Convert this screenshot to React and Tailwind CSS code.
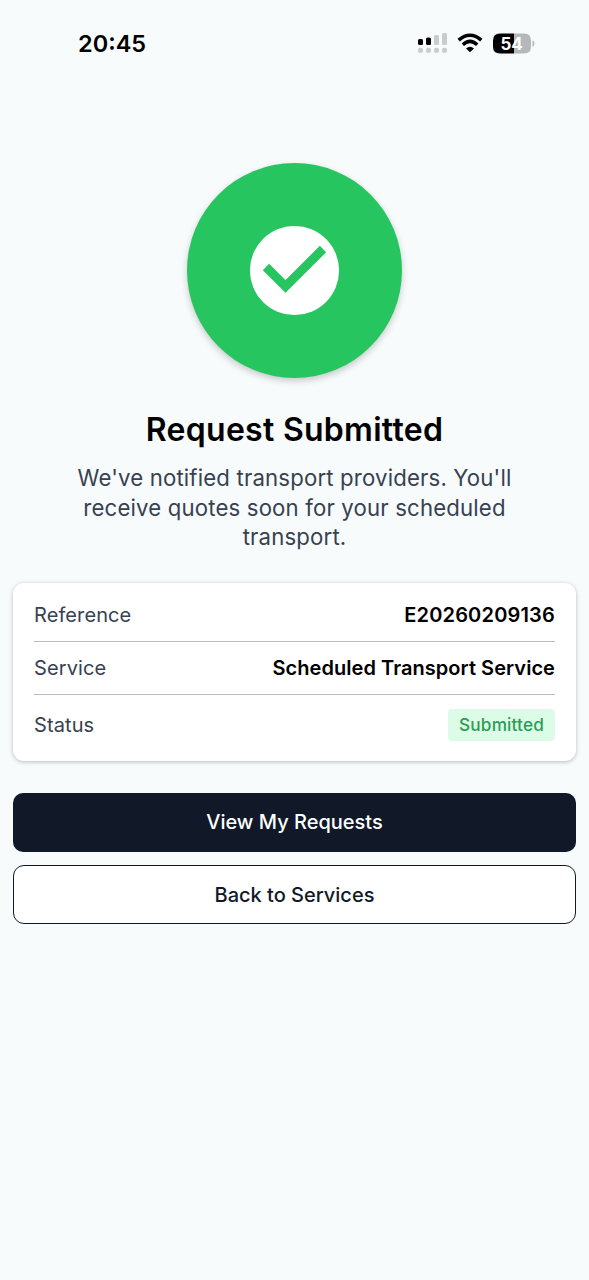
function Row({ label, children, last }) {
  return (
    <div className={"flex items-center justify-between " + (last ? "h-[60px]" : "h-[53px] border-b border-[#b9bbbc] pt-px")}>
      <span className="text-[20px] leading-6 tracking-[0.1px] text-[#374151]">{label}</span>
      {children}
    </div>
  );
}

function StatusBar() {
  return (
    <header className="flex h-[88px] items-center justify-between pl-[78px] pr-[54px]">
      <span className="text-[23.5px] font-semibold leading-7 text-black">20:45</span>
      <div className="flex items-center pb-[2px]">
        <svg width="32" height="22" viewBox="0 0 32 22" aria-hidden="true">
          <rect x="1" y="7" width="5" height="6" rx="1.5" fill="#000" />
          <rect x="9" y="5.5" width="5" height="7.5" rx="1.5" fill="#000" />
          <rect x="17" y="3" width="5" height="10" rx="1.5" fill="#c9cccd" />
          <rect x="25" y="1" width="5" height="12" rx="1.5" fill="#c9cccd" />
          {[1, 9, 17, 25].map((x) => <rect key={x} x={x} y="15.8" width="5" height="5" rx="1.7" fill="#c9cccd" />)}
        </svg>
        <svg className="ml-[8px] mr-[10px]" width="26" height="20" viewBox="0 0 26 20" fill="none" stroke="#000" aria-hidden="true">
          <path d="M1.7 7.2Q13-2.7 24.3 7.2" strokeWidth="3.6" />
          <path d="M5.8 11.7Q13 5.1 20.2 11.7" strokeWidth="3.5" />
          <path d="M13 19.3L9 15.5Q13 11.8 17 15.5Z" fill="#000" stroke="none" />
        </svg>
        <svg width="42" height="21" viewBox="0 0 42 21" aria-hidden="true">
          <path d="M7 .5H21V20.5H7Q0 20.5 0 13.5V7.5Q0 .5 7 .5Z" fill="#000" />
          <path d="M21 .5H31Q38 .5 38 7.5V13.5Q38 20.5 31 20.5H21Z" fill="#b5b8b9" />
          <path d="M39.5 7.2Q41.5 8 41.5 10.5T39.5 13.8Z" fill="#b5b8b9" />
          <text x="18.6" y="16.6" textAnchor="middle" fill="#fff" fontFamily="Inter, sans-serif" fontSize="17" fontWeight="700">54</text>
        </svg>
      </div>
    </header>
  );
}

export default function App() {
  return (
    <div className="min-h-[1280px] bg-[#f7fbfc] font-['Inter',sans-serif]">
      <StatusBar />
      <main className="flex flex-col px-[13px] pt-[75px]">
        <div className="flex size-[215px] items-center justify-center self-center rounded-full bg-[#26c55f] shadow-[0_3px_7px_rgba(0,0,0,0.2)]">
          <svg width="91" height="91" viewBox="0 0 91 91" aria-hidden="true">
            <circle cx="45.5" cy="45.5" r="44.6" fill="#fff" />
            <path d="M17 42L36.5 61.5L74 24" fill="none" stroke="#26c55f" strokeWidth="9" />
          </svg>
        </div>
        <h1 className="mt-[32px] text-center text-[32px] font-semibold leading-10 tracking-[0.28px] text-black">Request Submitted</h1>
        <p className="mt-[13px] text-center text-[22.2px] leading-[29.5px] tracking-[0.16px] text-[#374151]">
          We've notified transport providers. You'll<br />receive quotes soon for your scheduled<br />transport.
        </p>
        <section className="mt-[31px] h-[178px] rounded-[11px] bg-white px-[21px] pt-[6px] shadow-[0_1px_4px_rgba(0,0,0,0.25)]">
          <Row label="Reference"><span className="text-[20px] font-semibold tracking-[0.18px]">E20260209136</span></Row>
          <Row label="Service"><span className="text-[20px] font-semibold tracking-[0.05px]">Scheduled Transport Service</span></Row>
          <Row label="Status" last><span className="flex h-[32px] items-center rounded-[4px] bg-[#dcfce7] px-[11px] text-[17.2px] font-medium tracking-[0.16px] text-[#2a9d56]">Submitted</span></Row>
        </section>
        <button className="mt-[32px] h-[59px] rounded-[10px] bg-[#111827] text-[20px] font-medium text-white">View My Requests</button>
        <button className="mt-[13px] h-[59px] rounded-[11px] border-[1.5px] border-[#111827] bg-white pt-px text-[20px] font-medium text-[#111827]">Back to Services</button>
      </main>
    </div>
  );
}
